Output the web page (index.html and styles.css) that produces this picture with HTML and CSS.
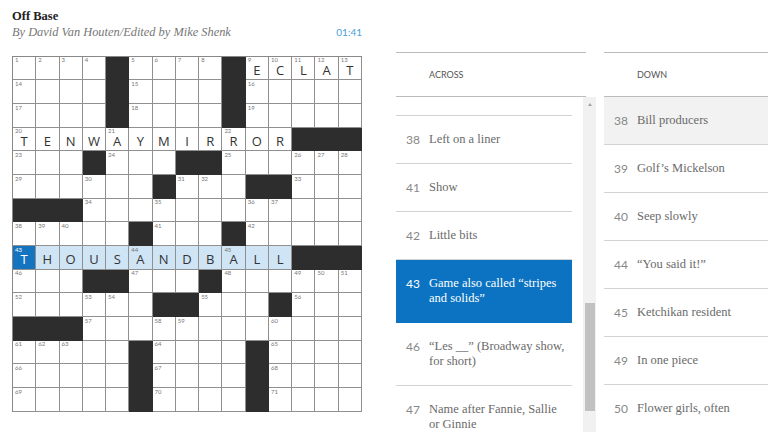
FILE: index.html
```html
<!DOCTYPE html>
<html lang="en">
<head>
    <meta charset="UTF-8">
    <meta name="viewport" content="width=device-width, initial-scale=1.0">
    <title>Off Base - Crossword</title>
    <link rel="stylesheet" href="styles.css">
</head>
<body>
    <div class="page">
        <!-- Puzzle -->
        <div class="puzzle">
            <h1 class="title">Off Base</h1>
            <div class="byline-row">
                <p class="byline">By David Van Houten/Edited by Mike Shenk</p>
                <span class="timer">01:41</span>
            </div>
            <div class="grid" id="grid"></div>
        </div>

        <!-- Across clues -->
        <div class="clue-col across">
            <div class="clue-head">Across</div>
            <div class="clue-body">
                <ul class="clue-list">
                    <li class="clue clue-cut"></li>
                    <li class="clue"><span class="num">38</span><span class="text">Left on a liner</span></li>
                    <li class="clue"><span class="num">41</span><span class="text">Show</span></li>
                    <li class="clue"><span class="num">42</span><span class="text">Little bits</span></li>
                    <li class="clue clue-active"><span class="num">43</span><span class="text">Game also called “stripes and solids”</span></li>
                    <li class="clue"><span class="num">46</span><span class="text">“Les __” (Broadway show, for short)</span></li>
                    <li class="clue"><span class="num">47</span><span class="text">Name after Fannie, Sallie or Ginnie</span></li>
                </ul>
                <div class="scrollbar">
                    <span class="scroll-arrow"></span>
                    <span class="scroll-thumb"></span>
                </div>
            </div>
        </div>

        <!-- Down clues -->
        <div class="clue-col down">
            <div class="clue-head">Down</div>
            <ul class="clue-list">
                <li class="clue clue-cross"><span class="num">38</span><span class="text">Bill producers</span></li>
                <li class="clue"><span class="num">39</span><span class="text">Golf’s Mickelson</span></li>
                <li class="clue"><span class="num">40</span><span class="text">Seep slowly</span></li>
                <li class="clue"><span class="num">44</span><span class="text">“You said it!”</span></li>
                <li class="clue"><span class="num">45</span><span class="text">Ketchikan resident</span></li>
                <li class="clue"><span class="num">49</span><span class="text">In one piece</span></li>
                <li class="clue"><span class="num">50</span><span class="text">Flower girls, often</span></li>
            </ul>
        </div>
    </div>

    <script>
        // '#' = black square, '.' = empty, letters = filled in
        const rows = [
            '....#....#ECLAT',
            '....#....#.....',
            '....#....#.....',
            'TENWAYMIRROR###',
            '...#...##......',
            '......#...##...',
            '###............',
            '.....#...#.....',
            'THOUSANDBALL###',
            '...##...#......',
            '......##...#...',
            '###............',
            '.....#....#....',
            '.....#....#....',
            '.....#....#....'
        ];

        // current word: 43 across
        const activeRow = 8;
        const wordStart = 0;
        const wordEnd = 11;
        const activeCol = 0;

        const grid = document.getElementById('grid');

        function isOpen(r, c) {
            return r >= 0 && r < 15 && c >= 0 && c < 15 && rows[r][c] !== '#';
        }

        let n = 0;
        for (let r = 0; r < 15; r++) {
            for (let c = 0; c < 15; c++) {
                const cell = document.createElement('div');
                cell.className = 'cell';

                if (!isOpen(r, c)) {
                    cell.classList.add('cell-block');
                    grid.appendChild(cell);
                    continue;
                }

                const across = !isOpen(r, c - 1) && isOpen(r, c + 1);
                const down = !isOpen(r - 1, c) && isOpen(r + 1, c);
                if (across || down) {
                    n++;
                    const num = document.createElement('span');
                    num.className = 'cell-num';
                    num.textContent = n;
                    cell.appendChild(num);
                }

                const ch = rows[r][c];
                if (ch !== '.') {
                    const letter = document.createElement('span');
                    letter.className = 'cell-letter';
                    letter.textContent = ch;
                    cell.appendChild(letter);
                }

                if (r === activeRow && c >= wordStart && c <= wordEnd) {
                    cell.classList.add(c === activeCol ? 'cell-active' : 'cell-word');
                }

                grid.appendChild(cell);
            }
        }
    </script>
</body>
</html>
```

FILE: styles.css
```css
* {
    margin: 0;
    padding: 0;
    box-sizing: border-box;
}

html,
body {
    overflow: hidden;
}

body {
    width: 768px;
    height: 432px;
    background: #fff;
    font-family: "Liberation Serif", serif;
    color: #333;
}

.page {
    display: flex;
    align-items: flex-start;
    padding-left: 12px;
}

/* Puzzle side */

.puzzle {
    width: 350px;
    flex-shrink: 0;
    padding-top: 8px;
}

.title {
    font-size: 12.5px;
    font-weight: bold;
    line-height: 16px;
    color: #222;
}

.byline-row {
    display: flex;
    justify-content: space-between;
    align-items: center;
    height: 16px;
}

.byline {
    font-size: 12.4px;
    font-style: italic;
    color: #777;
}

.timer {
    font-family: Lato, sans-serif;
    font-size: 10px;
    color: #4a9fd8;
}

.grid {
    display: grid;
    grid-template-columns: repeat(15, 1fr);
    grid-template-rows: repeat(15, 1fr);
    width: 350px;
    height: 356px;
    margin-top: 15.7px;
    border-top: 1px solid #888;
    border-left: 1px solid #888;
}

.cell {
    position: relative;
    display: flex;
    align-items: center;
    justify-content: center;
    padding-top: 3px;
    border-right: 1px solid #909090;
    border-bottom: 1px solid #909090;
    font-family: "Open Sans", sans-serif;
    font-size: 13px;
    line-height: 12px;
    color: #333;
}

.cell-num {
    position: absolute;
    top: 0.5px;
    left: 2px;
    font-family: Lato, sans-serif;
    font-size: 6px;
    line-height: 6px;
    color: #777;
}

.cell-block {
    background: #2d2d2d;
    border-color: #2d2d2d;
}

.cell-word {
    background: #cfe4f4;
}

.cell-active {
    background: #1574bf;
    color: #fff;
}

.cell-active .cell-num {
    color: #fff;
}

/* Clue lists */

.clue-col {
    flex-shrink: 0;
    margin-top: 52px;
}

.across {
    width: 200px;
    margin-left: 34px;
}

.down {
    width: 200px;
    margin-left: 8px;
}

.clue-head {
    display: flex;
    align-items: center;
    height: 45px;
    padding-left: 33px;
    border-top: 1px solid #bcbcbc;
    border-bottom: 1px solid #bcbcbc;
    font-family: Lato, sans-serif;
    font-size: 9px;
    text-transform: uppercase;
    color: #555;
}

.across .clue-head {
    margin-right: 10px;
}

.clue-body {
    display: flex;
    height: 340px;
}

.clue-list {
    list-style: none;
}

.across .clue-list {
    width: 176px;
}

.clue {
    display: flex;
    padding: 16px 4px 16px 0;
    border-bottom: 1px solid #d2d2d2;
    font-size: 12.5px;
    line-height: 15px;
    color: #6a6a6a;
}

.clue .num {
    flex-shrink: 0;
    width: 33px;
    padding-left: 10px;
    font-family: Lato, sans-serif;
    font-size: 12px;
    color: #888;
}

.clue-cut {
    height: 19px;
    padding: 0;
}

.clue-active {
    background: #0b73c1;
    border-bottom-color: #0b73c1;
    color: #fff;
}

.clue-active .num {
    color: #fff;
}

.clue-cross {
    background: #f2f2f2;
}

/* fake scrollbar of the across list */

.scrollbar {
    display: flex;
    flex-direction: column;
    align-items: center;
    width: 13px;
    margin-left: 11px;
    background: #f1f1f1;
}

.scroll-arrow {
    margin-top: 6px;
    border-left: 2.5px solid transparent;
    border-right: 2.5px solid transparent;
    border-bottom: 3px solid #a3a3a3;
}

.scroll-thumb {
    width: 10px;
    height: 108px;
    margin-top: 197px;
    background: #c1c1c1;
}
```
